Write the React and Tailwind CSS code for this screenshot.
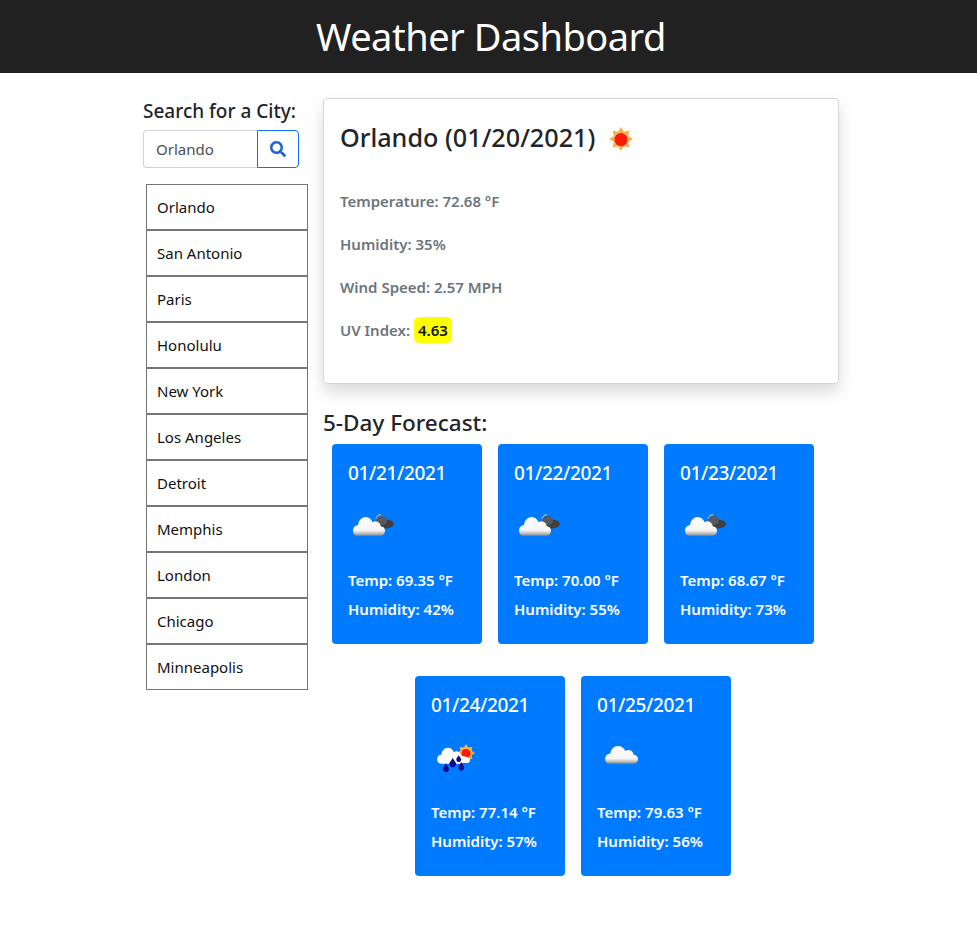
import React from 'react';

const cities = ['Orlando', 'San Antonio', 'Paris', 'Honolulu', 'New York', 'Los Angeles', 'Detroit', 'Memphis', 'London', 'Chicago', 'Minneapolis'];

const row1 = [
  { date: '01/21/2021', icon: 'dark', temp: '69.35', hum: '42' },
  { date: '01/22/2021', icon: 'dark', temp: '70.00', hum: '55' },
  { date: '01/23/2021', icon: 'dark', temp: '68.67', hum: '73' },
];
const row2 = [
  { date: '01/24/2021', icon: 'rain', temp: '77.14', hum: '57' },
  { date: '01/25/2021', icon: 'cloud', temp: '79.63', hum: '56' },
];

const cloudPath = 'M8 27c-3 0-5-2-5-4.500s2-4.500 5-4.500c.5-4 3.500-7 7.500-7 3.500 0 6 1.800 7 4.500 1-.6 2-.9 3-.9 2.800 0 4.800 1.800 5.300 4.200 2.500.1 4.200 1.700 4.200 3.800s-1.800 4.400-4.500 4.400z';

const Sun = ({ cx = 12, cy = 12, r = 6, ray = 11 }) => {
  const angles = [0, 45, 90, 135, 180, 225, 270, 315];
  return (
    <g>
      {angles.map((a) => (
        <polygon
          key={a}
          points={`${cx - 3},${cy - r} ${cx},${cy - ray} ${cx + 3},${cy - r}`}
          fill="#f9ab4a"
          transform={`rotate(${a} ${cx} ${cy})`}
        />
      ))}
      <circle cx={cx} cy={cy} r={r + 1.200} fill="#fbb04f" />
      <circle cx={cx} cy={cy + 0.5} r={r} fill="#fa1a08" />
    </g>
  );
};

const Drop = ({ x, y, r }) => (
  <path d={`M${x} ${y - r * 1.800}L${x - r * 0.850} ${y - r * 0.500}A${r} ${r} 0 1 0 ${x + r * 0.850} ${y - r * 0.500}Z`} fill="#0c0c8c" />
);

const WeatherIcon = ({ type }) => {
  return (
    <svg width="50" height="50" viewBox="0 0 50 50" className="block">
      <defs>
        <linearGradient id={`cl-${type}`} x1="0" y1="0" x2="0" y2="1">
          <stop offset="0" stopColor="#ffffff" />
          <stop offset="0.7" stopColor="#f6f6f6" />
          <stop offset="0.88" stopColor="#b9b9b9" />
          <stop offset="1" stopColor="#777777" />
        </linearGradient>
      </defs>
      {type === 'dark' && (
        <g>
          <path d="M28 19c.5-2.800 2.500-4.300 5-4.300" fill="none" stroke="#cfd8e4" strokeWidth="1" />
          <ellipse cx="37" cy="24" rx="9" ry="4.500" fill="#404043" />
          <ellipse cx="33.500" cy="20.500" rx="5.500" ry="4.500" fill="#5a5a5c" />
          <g transform="translate(2 3.900) scale(1 1.190)">
            <path d={cloudPath} fill={`url(#cl-${type})`} />
          </g>
        </g>
      )}
      {type === 'rain' && (
        <g>
          <Sun cx={35} cy={21} r={4.500} ray={9} />
          <path d="M27 26c3-2.500 9-2.500 12 1 .5 2-.5 4-3 4h-9z" fill="#ffffff" />
          <g transform="translate(3.500 4.700) scale(0.860 1)">
            <path d={cloudPath} fill="#ffffff" />
          </g>
          <Drop x={15} y={37} r={3} />
          <Drop x={21.700} y={32} r={3.300} />
          <Drop x={27.700} y={27.500} r={2.400} />
          <Drop x={30.300} y={35.500} r={3} />
        </g>
      )}
      {type === 'cloud' && (
        <g transform="translate(5 1.600) scale(1.030 1.125)">
          <path d={cloudPath} fill={`url(#cl-${type})`} />
        </g>
      )}
    </svg>
  );
};

const ForecastCard = ({ day }) => {
  return (
    <div className="w-[150px] h-[200px] bg-[#007bff] rounded-[4px] text-white pt-4 px-4">
      <div className="text-[19px] leading-[26px] font-medium tracking-[-0.350px] whitespace-nowrap">{day.date}</div>
      <div className="mt-[14px] mb-[20px]"><WeatherIcon type={day.icon} /></div>
      <div className="text-[15px] leading-[21px] font-semibold whitespace-nowrap">Temp: {day.temp} °F</div>
      <div className="text-[15px] leading-[21px] font-semibold mt-2 whitespace-nowrap">Humidity: {day.hum}%</div>
    </div>
  );
};

export default function App() {
  return (
    <div className="min-h-[925px] bg-white text-[#212529] font-['Noto_Sans','Open_Sans',sans-serif]">
      <header className="h-[73px] bg-[#212121] flex items-center justify-center pl-[5px] pb-[2px] text-white text-[38px] tracking-[-0.500px] leading-none">
        Weather Dashboard
      </header>

      <main className="flex pl-[143px] pt-[26px]">
        <aside className="w-[180px] shrink-0">
          <h2 className="text-[19px] leading-[25px] font-medium whitespace-nowrap">Search for a City:</h2>
          <div className="flex w-[156px] h-[38px] mt-[6px]">
            <div className="w-[114px] border border-[#ced4da] border-r-0 rounded-l-[4px] pl-3 text-[15px] text-[#495057] flex items-center">Orlando</div>
            <button className="w-[42px] border border-[#0d6efd] rounded-r-[4px] flex items-center justify-center">
              <svg width="16" height="16" viewBox="0 0 512 512" fill="#1d63d8">
                <path d="M505 442.700L405.300 343c-4.500-4.500-10.600-7-17-7H372c27.600-35.300 44-79.700 44-128C416 93.100 322.900 0 208 0S0 93.100 0 208s93.100 208 208 208c48.300 0 92.700-16.400 128-44v16.300c0 6.400 2.500 12.500 7 17l99.700 99.700c9.400 9.400 24.600 9.400 33.900 0l28.300-28.300c9.400-9.400 9.400-24.600.1-34zM208 336c-70.700 0-128-57.200-128-128 0-70.700 57.200-128 128-128 70.700 0 128 57.200 128 128 0 70.700-57.200 128-128 128z" />
              </svg>
            </button>
          </div>
          <ul className="mt-4 ml-[3px] w-[162px]">
            {cities.map((city) => (
              <li key={city} className="h-[46px] border border-[#767676] pl-[10px] flex items-center text-[15px] text-[#111]">
                {city}
              </li>
            ))}
          </ul>
        </aside>

        <section className="w-[516px] -mt-px">
          <div className="h-[286px] border border-[#d6d6d6] rounded-[4px] shadow-[0_8px_16px_rgba(0,0,0,0.15)] pt-[20px] px-4">
            <div className="flex items-center h-[36px]">
              <h1 className="text-[25.200px] leading-[36px] font-medium whitespace-nowrap">Orlando (01/20/2021)</h1>
              <svg width="26" height="26" viewBox="0 0 24 24" className="ml-[13px] mt-[3px]"><Sun /></svg>
            </div>
            <div className="mt-[36px] flex flex-col gap-[22px] text-[15px] leading-[21px] font-semibold text-[#6c757d]">
              <p>Temperature: 72.68 °F</p>
              <p>Humidity: 35%</p>
              <p>Wind Speed: 2.57 MPH</p>
              <p>UV Index: <span className="bg-[#ffff00] text-[#111] rounded-[5px] px-1 py-[3px]">4.63</span></p>
            </div>
          </div>

          <h2 className="text-[22.500px] leading-[28px] font-medium mt-[25px]">5-Day Forecast:</h2>
          <div className="w-[500px] mt-[7px] flex flex-col gap-8">
            <div className="flex justify-center gap-4">
              {row1.map((d) => <ForecastCard key={d.date} day={d} />)}
            </div>
            <div className="flex justify-center gap-4">
              {row2.map((d) => <ForecastCard key={d.date} day={d} />)}
            </div>
          </div>
        </section>
      </main>
    </div>
  );
}
